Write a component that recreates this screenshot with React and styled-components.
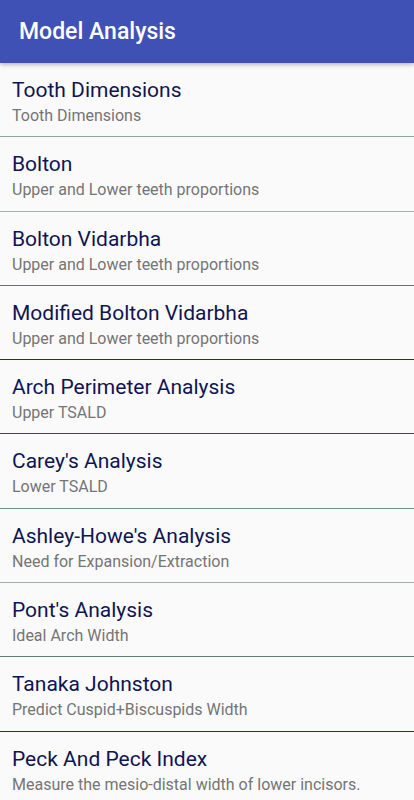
import React from 'react';
import styled, { createGlobalStyle } from 'styled-components';

const GlobalStyle = createGlobalStyle`
  body {
    margin: 0;
    background: #fafafa;
    font-family: Roboto, "Noto Sans", sans-serif;
  }
`;

const Page = styled.div`
  width: 414px;
  min-height: 800px;
  background: #fafafa;
  overflow: hidden;
`;

const AppBar = styled.header`
  height: 63px;
  background: #3f51b5;
  display: flex;
  align-items: center;
  padding-left: 19px;
  box-shadow: 0 2px 4px rgba(0, 0, 0, 0.25);
  position: relative;
  z-index: 1;
`;

const AppTitle = styled.h1`
  margin: 0;
  color: #ffffff;
  font-size: 23px;
  font-weight: 500;
  letter-spacing: 0;
`;

const List = styled.ul`
  list-style: none;
  margin: 0;
  padding: 0;
`;

const Item = styled.li`
  height: 74.3px;
  box-sizing: border-box;
  padding: 14px 12px 0;
  border-bottom: 1px solid ${({ divider }) => divider};
`;

const Title = styled.div`
  color: #0f1552;
  font-size: 21px;
  line-height: 26px;
`;

const Subtitle = styled.div`
  color: #757575;
  font-size: 16px;
  line-height: 23px;
  padding-top: 1px;
`;

const items = [
  ['Tooth Dimensions', 'Tooth Dimensions', '#8aa59b'],
  ['Bolton', 'Upper and Lower teeth proportions', '#9fb3ad'],
  ['Bolton Vidarbha', 'Upper and Lower teeth proportions', '#4f7e72'],
  ['Modified Bolton Vidarbha', 'Upper and Lower teeth proportions', '#1f3d1f'],
  ['Arch Perimeter Analysis', 'Upper TSALD', '#1a5a4a'],
  ["Carey's Analysis", 'Lower TSALD', '#6f8f88'],
  ["Ashley-Howe's Analysis", 'Need for Expansion/Extraction', '#a0b0aa'],
  ["Pont's Analysis", 'Ideal Arch Width', '#5d7f75'],
  ['Tanaka Johnston', 'Predict Cuspid+Biscuspids Width', '#0a4a1a'],
  ['Peck And Peck Index', 'Measure the mesio-distal width of lower incisors.', 'transparent'],
];

export default function App() {
  return (
    <Page>
      <GlobalStyle />
      <AppBar>
        <AppTitle>Model Analysis</AppTitle>
      </AppBar>
      <List>
        {items.map(([title, sub, divider]) => (
          <Item key={title} divider={divider}>
            <Title>{title}</Title>
            <Subtitle>{sub}</Subtitle>
          </Item>
        ))}
      </List>
    </Page>
  );
}
